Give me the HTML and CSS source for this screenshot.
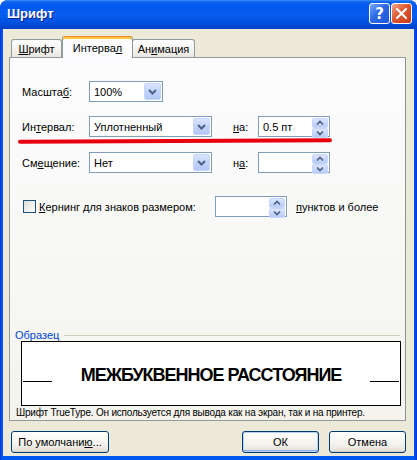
FILE: index.html
```html
<!DOCTYPE html>
<html lang="ru">
<head>
  <meta charset="UTF-8">
  <title>Шрифт</title>
  <link rel="stylesheet" href="styles.css">
</head>
<body>
  <div class="window">
    <div class="titlebar">
      <span class="title">Шрифт</span>
      <div class="caption-buttons">
        <div class="cap help">?</div>
        <div class="cap close">
          <svg width="19" height="19" viewBox="0 0 19 19"><path d="M5 5 L14 14 M14 5 L5 14" stroke="#fff" stroke-width="2.2" stroke-linecap="round" fill="none"/></svg>
        </div>
      </div>
    </div>

    <div class="client">
      <div class="tabs">
        <div class="tab tab-font"><u>Ш</u>рифт</div>
        <div class="tab tab-active">Интерва<u>л</u></div>
        <div class="tab tab-anim">Ан<u>и</u>мация</div>
      </div>

      <div class="panel">
        <div class="field-row">
          <span class="field-label">Масшта<u>б</u>:</span>
          <div class="combo combo-short">
            <span class="combo-text">100%</span>
            <span class="drop"><svg width="15" height="15" viewBox="0 0 15 15"><path d="M4 6 L7.5 9.5 L11 6" stroke="#4d6185" stroke-width="2" fill="none"/></svg></span>
          </div>
        </div>

        <div class="field-row row-spacing">
          <span class="field-label">Ин<u>т</u>ервал:</span>
          <div class="combo">
            <span class="combo-text">Уплотненный</span>
            <span class="drop"><svg width="15" height="15" viewBox="0 0 15 15"><path d="M4 6 L7.5 9.5 L11 6" stroke="#4d6185" stroke-width="2" fill="none"/></svg></span>
          </div>
          <span class="by-label"><u>н</u>а:</span>
          <div class="combo spin">
            <span class="combo-text">0.5 пт</span>
            <span class="spin-buttons">
              <span class="spin-btn"><svg width="14" height="8" viewBox="0 0 14 8"><path d="M4 5.5 L7 2.5 L10 5.5" stroke="#4d6185" stroke-width="1.7" fill="none"/></svg></span>
              <span class="spin-btn"><svg width="14" height="8" viewBox="0 0 14 8"><path d="M4 2.5 L7 5.5 L10 2.5" stroke="#4d6185" stroke-width="1.7" fill="none"/></svg></span>
            </span>
          </div>
        </div>

        <div class="field-row row-spacing-2">
          <span class="field-label">См<u>е</u>щение:</span>
          <div class="combo">
            <span class="combo-text">Нет</span>
            <span class="drop"><svg width="15" height="15" viewBox="0 0 15 15"><path d="M4 6 L7.5 9.5 L11 6" stroke="#4d6185" stroke-width="2" fill="none"/></svg></span>
          </div>
          <span class="by-label">н<u>а</u>:</span>
          <div class="combo spin">
            <span class="combo-text"></span>
            <span class="spin-buttons">
              <span class="spin-btn"><svg width="14" height="8" viewBox="0 0 14 8"><path d="M4 5.5 L7 2.5 L10 5.5" stroke="#4d6185" stroke-width="1.7" fill="none"/></svg></span>
              <span class="spin-btn"><svg width="14" height="8" viewBox="0 0 14 8"><path d="M4 2.5 L7 5.5 L10 2.5" stroke="#4d6185" stroke-width="1.7" fill="none"/></svg></span>
            </span>
          </div>
        </div>

        <div class="field-row kerning-row">
          <span class="checkbox"></span>
          <span class="kerning-label"><u>К</u>ернинг для знаков размером:</span>
          <div class="combo spin">
            <span class="combo-text"></span>
            <span class="spin-buttons">
              <span class="spin-btn"><svg width="14" height="8" viewBox="0 0 14 8"><path d="M4 5.5 L7 2.5 L10 5.5" stroke="#4d6185" stroke-width="1.7" fill="none"/></svg></span>
              <span class="spin-btn"><svg width="14" height="8" viewBox="0 0 14 8"><path d="M4 2.5 L7 5.5 L10 2.5" stroke="#4d6185" stroke-width="1.7" fill="none"/></svg></span>
            </span>
          </div>
          <span class="points-label"><u>п</u>унктов и более</span>
        </div>

        <div class="sample-group">
          <div class="legend"><span>Образец</span><span class="legend-line"></span></div>
          <div class="sample">
            <span class="sample-rule"></span>
            <span class="sample-text">МЕЖБУКВЕННОЕ РАССТОЯНИЕ</span>
            <span class="sample-rule"></span>
          </div>
          <div class="sample-note">Шрифт TrueType. Он используется для вывода как на экран, так и на принтер.</div>
        </div>

        <!-- red marker stroke under the spacing row -->
        <div class="marker"></div>
      </div>

      <div class="buttons">
        <div class="btn btn-default-set">По умолчани<u>ю</u>...</div>
        <div class="btn btn-ok">ОК</div>
        <div class="btn">Отмена</div>
      </div>
    </div>
  </div>
</body>
</html>
```

FILE: styles.css
```css
* {
  box-sizing: border-box;
}

body {
  margin: 0;
  background: #fff;
  font-family: "Liberation Sans", Arial, sans-serif;
  font-size: 11px;
  color: #000;
}

u {
  text-decoration: underline;
  text-underline-offset: 1px;
}

.window {
  width: 417px;
  height: 460px;
  display: flex;
  flex-direction: column;
  background: linear-gradient(90deg, #0831d9, #0058ee 2px, #0058ee 414px, #0831d9);
  border-radius: 8px 8px 0 0;
  overflow: hidden;
}

/* title bar */
.titlebar {
  flex: none;
  height: 29px;
  display: flex;
  align-items: center;
  padding: 0 5px 2px 7px;
  background: linear-gradient(#3c8cf8 0, #0a62ec 2px, #0058ee 6px, #0a5ef0 14px, #0052e0 22px, #0046cf 27px, #0840c8 29px);
}

.title {
  flex: 1;
  color: #fff;
  font-weight: bold;
  font-size: 13px;
  text-shadow: 1px 1px #0a1c8c;
}

.caption-buttons {
  display: flex;
  gap: 1px;
}

.cap {
  width: 21px;
  height: 21px;
  border: 1px solid #fff;
  border-radius: 3px;
  display: flex;
  align-items: center;
  justify-content: center;
}

.help {
  background: linear-gradient(135deg, #7aa6f7, #2d6ae6 45%, #1a55d6);
  color: #fff;
  font-family: "DejaVu Sans", sans-serif;
  font-weight: bold;
  font-size: 15px;
}

.close {
  background: linear-gradient(135deg, #f0a58a, #e0562f 45%, #c43b14);
}

/* dialog body */
.client {
  flex: 1;
  margin: 0 3px 4px;
  background: #ece9d8;
  padding: 7px 8px 0 6px;
  display: flex;
  flex-direction: column;
}

.tabs {
  height: 21px;
  display: flex;
  align-items: flex-end;
  padding-left: 2px;
  position: relative;
  z-index: 1;
}

.tab {
  height: 18px;
  display: flex;
  align-items: center;
  justify-content: center;
  border: 1px solid #919b9c;
  border-bottom: none;
  border-radius: 3px 3px 0 0;
  background: linear-gradient(#fff, #f3f2ee 60%, #e8e7e1);
}

.tab-font {
  width: 51px;
}

.tab-active {
  width: 71px;
  height: 22px;
  margin: 0 -1px -1px 0;
  background: #fcfcfe;
  border-top: 1px solid #e68b2c;
  box-shadow: inset 0 2px #ffc73c;
  padding-top: 1px;
  position: relative;
  z-index: 2;
}

.tab-anim {
  width: 63px;
}

.panel {
  flex: none;
  height: 364px;
  border: 1px solid #919b9c;
  border-right-color: #8a9293;
  background: linear-gradient(#fcfcfe, #f7f7f4 60%, #f4f3ee);
  padding: 23px 0 1px;
  display: flex;
  flex-direction: column;
  position: relative;
}

.field-row {
  height: 21px;
  display: flex;
  align-items: center;
  padding-left: 12px;
}

.row-spacing {
  margin-top: 14px;
}

.row-spacing-2 {
  margin-top: 15px;
}

.field-label {
  width: 67px;
}

.combo {
  width: 123px;
  height: 21px;
  display: flex;
  align-items: center;
  border: 1px solid #7f9db9;
  background: #fff;
  padding: 1px;
}

.combo-short {
  width: 74px;
}

.combo-text {
  flex: 1;
  padding-left: 3px;
  white-space: nowrap;
}

.drop {
  width: 17px;
  height: 17px;
  display: flex;
  align-items: center;
  justify-content: center;
  border: 1px solid #c5d5fc;
  border-radius: 2px;
  background: linear-gradient(#dae5fd, #c2d3fa 50%, #b3c8f6);
}

.by-label {
  width: 25px;
  margin-left: 21px;
}

.spin {
  width: 72px;
}

.spin-buttons {
  width: 16px;
  height: 17px;
  display: flex;
  flex-direction: column;
}

.spin-btn {
  flex: 1;
  display: flex;
  align-items: center;
  justify-content: center;
  border: 1px solid #c5d5fc;
  border-radius: 2px;
  background: linear-gradient(#dae5fd, #b7cbf7);
}

.kerning-row {
  margin-top: 23px;
}

.checkbox {
  width: 13px;
  height: 13px;
  margin-left: 1px;
  border: 1px solid #1c5180;
  background: linear-gradient(135deg, #dcdcd7, #fff);
}

.kerning-label {
  width: 176px;
  margin-left: 3px;
}

.points-label {
  margin-left: 9px;
}

/* sample preview */
.sample-group {
  margin-top: auto;
}

.legend {
  height: 12px;
  display: flex;
  align-items: center;
  padding-left: 5px;
  color: #0046d5;
}

.legend-line {
  flex: 1;
  margin: 1px 5px 0 5px;
  border-top: 1px solid #d0d0bf;
}

.sample {
  height: 65px;
  margin: 0 4px 0 11px;
  border: 1px solid #000;
  background: #fff;
  display: flex;
  align-items: center;
  padding: 0 1px;
}

.sample-rule {
  width: 29px;
  height: 1px;
  background: #000;
  margin-top: 16px;
}

.sample-text {
  flex: 1;
  margin-top: 3px;
  text-align: center;
  font-weight: bold;
  font-size: 18px;
  line-height: 1;
  letter-spacing: -1px;
}

.sample-note {
  height: 13px;
  line-height: 13px;
  padding-left: 6px;
  font-size: 10px;
  letter-spacing: -0.2px;
  white-space: nowrap;
}

.marker {
  position: absolute;
  left: 8px;
  top: 81px;
  width: 314px;
  height: 4px;
  border-radius: 2px;
  background: #e8000f;
  transform: rotate(-0.25deg);
}

/* bottom buttons */
.buttons {
  display: flex;
  margin-top: 10px;
  padding-left: 2px;
}

.btn {
  width: 77px;
  height: 22px;
  display: flex;
  align-items: center;
  justify-content: center;
  border: 1px solid #003c74;
  border-radius: 3px;
  background: linear-gradient(#fff, #f4f3ee 60%, #e6e4dc 90%, #d6d0c5);
}

.btn-default-set {
  width: 98px;
  margin-right: auto;
}

.btn-ok {
  margin-right: 10px;
  box-shadow: inset 0 0 0 1px #b8d0f6, inset 0 -1px 0 1px #8fb0ec;
}
```
